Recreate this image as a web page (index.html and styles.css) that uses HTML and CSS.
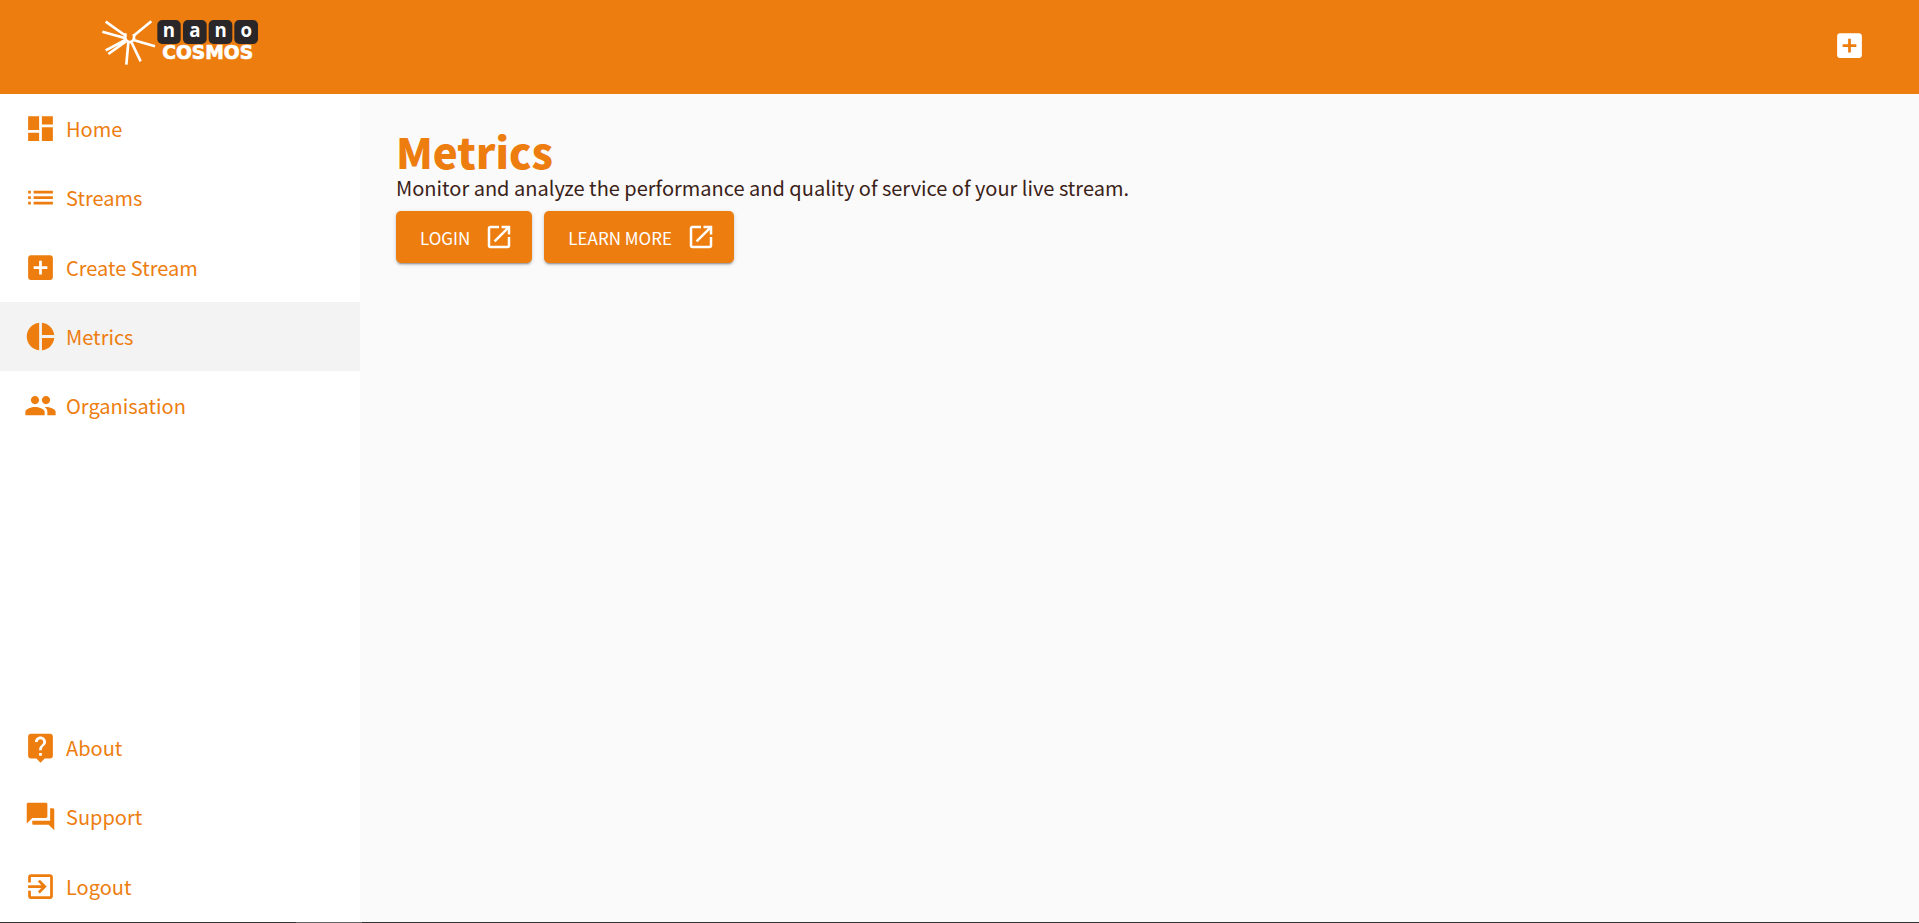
FILE: index.html
```html
<!DOCTYPE html>
<html lang="en">
<head>
<meta charset="utf-8">
<title>Metrics</title>
<link rel="stylesheet" href="styles.css">
</head>
<body>
<div class="app">
  <header class="topbar">
    <a class="logo" href="#" aria-label="nanocosmos home">
      <svg class="logo-art" viewBox="36 30 471 144">
        <g class="burst">
          <path d="M108 84L47 41M104 90L37 71M106 96L47 127M108 100L55 138M115 102L109 170M124 102L152 160M130 96L195 115M130 84L184 40"/>
          <path d="M106 76V92Q108 98 116 102H122Q130 98 132 92V78"/>
        </g>
        <g class="tiles">
          <rect x="202" y="36" width="70" height="72" rx="15"/>
          <rect x="279" y="36" width="71" height="72" rx="15"/>
          <rect x="356" y="36" width="71" height="72" rx="15"/>
          <rect x="433" y="36" width="71" height="72" rx="15"/>
        </g>
        <g class="nano">
          <text x="237" y="87">n</text>
          <text x="315" y="87">a</text>
          <text x="392" y="87">n</text>
          <text x="469" y="87">o</text>
        </g>
        <text class="cosmos" x="353" y="153">COSMOS</text>
      </svg>
    </a>
    <button class="icon-button" type="button" aria-label="Create stream">
      <svg class="icon" viewBox="0 0 24 24"><path d="M19 3H5c-1.11 0-2 .9-2 2v14c0 1.1.89 2 2 2h14c1.1 0 2-.9 2-2V5c0-1.1-.9-2-2-2zm-2 10h-4v4h-2v-4H7v-2h4V7h2v4h4v2z"/></svg>
    </button>
  </header>
  <div class="body">
    <nav class="sidebar">
      <div class="menu menu-main">
        <a class="item" href="#"><svg class="icon" viewBox="0 0 24 24"><path d="M3 13h8V3H3v10zm0 8h8v-6H3v6zm10 0h8V11h-8v10zm0-18v6h8V3h-8z"/></svg>Home</a>
        <a class="item" href="#"><svg class="icon" viewBox="0 0 24 24"><path d="M3 13h2v-2H3v2zm0 4h2v-2H3v2zm0-8h2V7H3v2zm4 4h14v-2H7v2zm0 4h14v-2H7v2zM7 7v2h14V7H7z"/></svg>Streams</a>
        <a class="item" href="#"><svg class="icon" viewBox="0 0 24 24"><path d="M19 3H5c-1.11 0-2 .9-2 2v14c0 1.1.89 2 2 2h14c1.1 0 2-.9 2-2V5c0-1.1-.9-2-2-2zm-2 10h-4v4h-2v-4H7v-2h4V7h2v4h4v2z"/></svg>Create Stream</a>
        <a class="item item-active" href="#" aria-current="page"><svg class="icon" viewBox="0 0 24 24"><path d="M11 2v20c-5.07-.5-9-4.79-9-10s3.93-9.5 9-10zm2.03 0v8.99H22c-.47-4.74-4.24-8.52-8.97-8.99zm0 11.01V22c4.74-.47 8.5-4.25 8.97-8.99h-8.97z"/></svg>Metrics</a>
        <a class="item" href="#"><svg class="icon" viewBox="0 0 24 24"><path d="M16 11c1.66 0 2.99-1.34 2.99-3S17.66 5 16 5c-1.66 0-3 1.34-3 3s1.34 3 3 3zm-8 0c1.66 0 2.99-1.34 2.99-3S9.66 5 8 5C6.34 5 5 6.34 5 8s1.34 3 3 3zm0 2c-2.33 0-7 1.17-7 3.5V19h14v-2.5c0-2.33-4.67-3.5-7-3.5zm8 0c-.29 0-.62.02-.97.05 1.16.84 1.97 1.97 1.97 3.45V19h6v-2.5c0-2.33-4.67-3.5-7-3.5z"/></svg>Organisation</a>
      </div>
      <div class="menu menu-extra">
        <a class="item" href="#"><svg class="icon" viewBox="0 0 24 24"><path d="M19 2H5c-1.11 0-2 .9-2 2v14c0 1.1.89 2 2 2h4l3 3 3-3h4c1.1 0 2-.9 2-2V4c0-1.1-.9-2-2-2zm-6 16h-2v-2h2v2zm2.07-7.75l-.9.92C13.45 11.9 13 12.5 13 14h-2v-.5c0-1.1.45-2.1 1.17-2.83l1.24-1.26c.37-.36.59-.86.59-1.41 0-1.1-.9-2-2-2s-2 .9-2 2H8c0-2.21 1.79-4 4-4s4 1.79 4 4c0 .88-.36 1.68-.93 2.25z"/></svg>About</a>
        <a class="item" href="#"><svg class="icon" viewBox="0 0 24 24"><path d="M21 6h-2v9H6v2c0 .55.45 1 1 1h11l4 4V7c0-.55-.45-1-1-1zm-4 6V3c0-.55-.45-1-1-1H3c-.55 0-1 .45-1 1v14l4-4h10c.55 0 1-.45 1-1z"/></svg>Support</a>
        <a class="item" href="#"><svg class="icon" viewBox="0 0 24 24"><path d="M10.09 15.59L11.5 17l5-5-5-5-1.41 1.41L12.67 11H3v2h9.67l-2.58 2.59zM19 3H5c-1.11 0-2 .9-2 2v4h2V5h14v14H5v-4H3v4c0 1.1.89 2 2 2h14c1.1 0 2-.9 2-2V5c0-1.1-.9-2-2-2z"/></svg>Logout</a>
      </div>
    </nav>
    <main class="content">
      <h1 class="title">Metrics</h1>
      <p class="lead">Monitor and analyze the performance and quality of service of your live stream.</p>
      <div class="actions">
        <a class="button" href="#">LOGIN<svg class="button-icon" viewBox="0 0 24 24"><path d="M19 19H5V5h7V3H5c-1.11 0-2 .9-2 2v14c0 1.1.89 2 2 2h14c1.1 0 2-.9 2-2v-7h-2v7zM14 3v2h3.59l-9.83 9.83 1.41 1.41L19 6.41V10h2V3h-7z"/></svg></a>
        <a class="button" href="#">LEARN MORE<svg class="button-icon" viewBox="0 0 24 24"><path d="M19 19H5V5h7V3H5c-1.11 0-2 .9-2 2v14c0 1.1.89 2 2 2h14c1.1 0 2-.9 2-2v-7h-2v7zM14 3v2h3.59l-9.83 9.83 1.41 1.41L19 6.41V10h2V3h-7z"/></svg></a>
      </div>
    </main>
  </div>
  <div class="edge"><div class="edge-thumb"></div></div>
</div>
</body>
</html>
```
FILE: styles.css
```css
:root {
  --orange: #ed7d0f;
}

* {
  box-sizing: border-box;
}

body {
  margin: 0;
  background: #fafafa;
  color: #3a2218;
  font-family: "Noto Sans CJK SC", "Noto Sans", sans-serif;
  font-size: 20px;
}

.app {
  display: flex;
  flex-direction: column;
  min-height: 100vh;
}

.topbar {
  display: flex;
  justify-content: space-between;
  align-items: flex-start;
  padding: 18px 53px 28px 102px;
  background: var(--orange);
}

.logo {
  display: block;
}

.logo-art {
  display: block;
  width: 157px;
  height: 48px;
}

.burst {
  fill: none;
  stroke: #fff;
  stroke-width: 8;
}

.tiles {
  fill: #2b2627;
}

.nano {
  fill: #fff;
  font-family: "Open Sans", sans-serif;
  font-size: 56px;
  font-weight: 700;
  text-anchor: middle;
}

.cosmos {
  fill: #fff;
  stroke: #fff;
  stroke-width: 2;
  font-family: "DejaVu Sans", sans-serif;
  font-size: 56px;
  font-weight: 700;
  text-anchor: middle;
}

.icon-button {
  margin: 11px 0 0;
  padding: 0;
  border: 0;
  background: none;
  color: #fff;
  cursor: pointer;
}

.icon {
  display: block;
  flex: none;
  width: 33px;
  height: 33px;
  fill: currentColor;
}

.body {
  display: flex;
  flex: 1;
}

.sidebar {
  display: flex;
  flex: none;
  flex-direction: column;
  justify-content: space-between;
  width: 360px;
  padding-bottom: 1px;
  background: #fff;
}

.menu {
  display: flex;
  flex-direction: column;
}

.menu-main {
  height: 346px;
}

.menu-extra {
  height: 208px;
}

.item {
  display: flex;
  flex: 1;
  align-items: center;
  gap: 9px;
  padding: 0 24px;
  color: var(--orange);
  text-decoration: none;
}

.item-active {
  background: #f3f3f3;
}

.content {
  flex: 1;
  padding: 33px 36px;
}

.title {
  margin: 0;
  color: var(--orange);
  font-size: 42px;
  font-weight: 900;
  line-height: 48px;
}

.lead {
  margin: 0 0 11px;
  line-height: 25px;
}

.actions {
  display: flex;
  gap: 12px;
}

.button {
  display: flex;
  align-items: center;
  gap: 14px;
  height: 52px;
  padding: 0 18px 0 24px;
  border-radius: 5px;
  background: var(--orange);
  box-shadow: 0 3px 1px -2px rgba(0, 0, 0, .2), 0 2px 2px rgba(0, 0, 0, .14), 0 1px 5px rgba(0, 0, 0, .12);
  color: #fff;
  font-size: 17px;
  text-decoration: none;
}

.button-icon {
  width: 30px;
  height: 30px;
  fill: currentColor;
}

.edge {
  height: 1px;
  padding-left: 296px;
  background: #333;
}

.edge-thumb {
  width: 66px;
  height: 1px;
  background: #666;
}
```
